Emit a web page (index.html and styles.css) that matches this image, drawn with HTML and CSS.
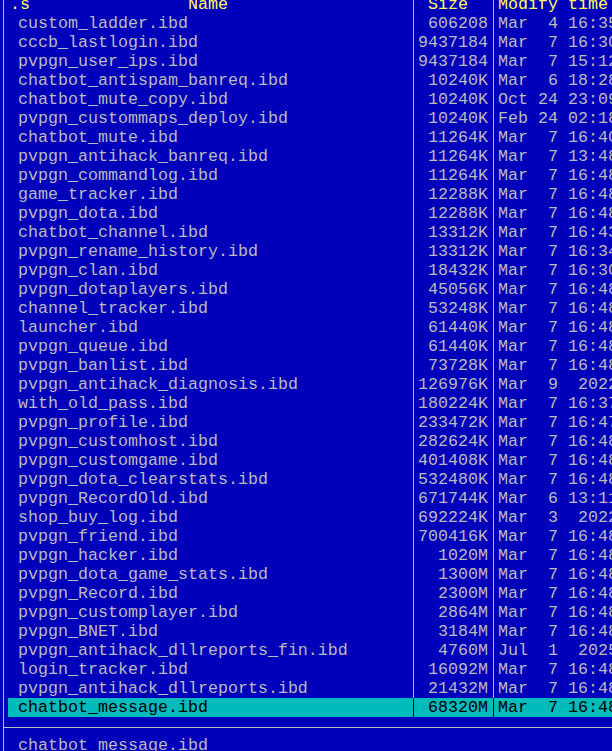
FILE: index.html
```html
<!DOCTYPE html>
<html>
<head>
<meta charset="utf-8">
<link rel="stylesheet" href="styles.css">
</head>
<body>
<div class="panel">
  <div class="row head"><span class="bd"></span><span class="type">.s</span><span class="name">Name</span><span class="sep"></span><span class="size">Size</span><span class="sep"></span><span class="time">Modify time</span><span class="bd"></span></div>
  <div class="row"><span class="bd"></span><span class="type"></span><span class="name">custom_ladder.ibd</span><span class="sep"></span><span class="size">606208</span><span class="sep"></span><span class="time">Mar  4 16:35</span><span class="bd"></span></div>
  <div class="row"><span class="bd"></span><span class="type"></span><span class="name">cccb_lastlogin.ibd</span><span class="sep"></span><span class="size">9437184</span><span class="sep"></span><span class="time">Mar  7 16:30</span><span class="bd"></span></div>
  <div class="row"><span class="bd"></span><span class="type"></span><span class="name">pvpgn_user_ips.ibd</span><span class="sep"></span><span class="size">9437184</span><span class="sep"></span><span class="time">Mar  7 15:12</span><span class="bd"></span></div>
  <div class="row"><span class="bd"></span><span class="type"></span><span class="name">chatbot_antispam_banreq.ibd</span><span class="sep"></span><span class="size">10240K</span><span class="sep"></span><span class="time">Mar  6 18:28</span><span class="bd"></span></div>
  <div class="row"><span class="bd"></span><span class="type"></span><span class="name">chatbot_mute_copy.ibd</span><span class="sep"></span><span class="size">10240K</span><span class="sep"></span><span class="time">Oct 24 23:09</span><span class="bd"></span></div>
  <div class="row"><span class="bd"></span><span class="type"></span><span class="name">pvpgn_custommaps_deploy.ibd</span><span class="sep"></span><span class="size">10240K</span><span class="sep"></span><span class="time">Feb 24 02:18</span><span class="bd"></span></div>
  <div class="row"><span class="bd"></span><span class="type"></span><span class="name">chatbot_mute.ibd</span><span class="sep"></span><span class="size">11264K</span><span class="sep"></span><span class="time">Mar  7 16:40</span><span class="bd"></span></div>
  <div class="row"><span class="bd"></span><span class="type"></span><span class="name">pvpgn_antihack_banreq.ibd</span><span class="sep"></span><span class="size">11264K</span><span class="sep"></span><span class="time">Mar  7 13:48</span><span class="bd"></span></div>
  <div class="row"><span class="bd"></span><span class="type"></span><span class="name">pvpgn_commandlog.ibd</span><span class="sep"></span><span class="size">11264K</span><span class="sep"></span><span class="time">Mar  7 16:48</span><span class="bd"></span></div>
  <div class="row"><span class="bd"></span><span class="type"></span><span class="name">game_tracker.ibd</span><span class="sep"></span><span class="size">12288K</span><span class="sep"></span><span class="time">Mar  7 16:48</span><span class="bd"></span></div>
  <div class="row"><span class="bd"></span><span class="type"></span><span class="name">pvpgn_dota.ibd</span><span class="sep"></span><span class="size">12288K</span><span class="sep"></span><span class="time">Mar  7 16:48</span><span class="bd"></span></div>
  <div class="row"><span class="bd"></span><span class="type"></span><span class="name">chatbot_channel.ibd</span><span class="sep"></span><span class="size">13312K</span><span class="sep"></span><span class="time">Mar  7 16:43</span><span class="bd"></span></div>
  <div class="row"><span class="bd"></span><span class="type"></span><span class="name">pvpgn_rename_history.ibd</span><span class="sep"></span><span class="size">13312K</span><span class="sep"></span><span class="time">Mar  7 16:34</span><span class="bd"></span></div>
  <div class="row"><span class="bd"></span><span class="type"></span><span class="name">pvpgn_clan.ibd</span><span class="sep"></span><span class="size">18432K</span><span class="sep"></span><span class="time">Mar  7 16:30</span><span class="bd"></span></div>
  <div class="row"><span class="bd"></span><span class="type"></span><span class="name">pvpgn_dotaplayers.ibd</span><span class="sep"></span><span class="size">45056K</span><span class="sep"></span><span class="time">Mar  7 16:48</span><span class="bd"></span></div>
  <div class="row"><span class="bd"></span><span class="type"></span><span class="name">channel_tracker.ibd</span><span class="sep"></span><span class="size">53248K</span><span class="sep"></span><span class="time">Mar  7 16:48</span><span class="bd"></span></div>
  <div class="row"><span class="bd"></span><span class="type"></span><span class="name">launcher.ibd</span><span class="sep"></span><span class="size">61440K</span><span class="sep"></span><span class="time">Mar  7 16:48</span><span class="bd"></span></div>
  <div class="row"><span class="bd"></span><span class="type"></span><span class="name">pvpgn_queue.ibd</span><span class="sep"></span><span class="size">61440K</span><span class="sep"></span><span class="time">Mar  7 16:48</span><span class="bd"></span></div>
  <div class="row"><span class="bd"></span><span class="type"></span><span class="name">pvpgn_banlist.ibd</span><span class="sep"></span><span class="size">73728K</span><span class="sep"></span><span class="time">Mar  7 16:48</span><span class="bd"></span></div>
  <div class="row"><span class="bd"></span><span class="type"></span><span class="name">pvpgn_antihack_diagnosis.ibd</span><span class="sep"></span><span class="size">126976K</span><span class="sep"></span><span class="time">Mar  9  2022</span><span class="bd"></span></div>
  <div class="row"><span class="bd"></span><span class="type"></span><span class="name">with_old_pass.ibd</span><span class="sep"></span><span class="size">180224K</span><span class="sep"></span><span class="time">Mar  7 16:37</span><span class="bd"></span></div>
  <div class="row"><span class="bd"></span><span class="type"></span><span class="name">pvpgn_profile.ibd</span><span class="sep"></span><span class="size">233472K</span><span class="sep"></span><span class="time">Mar  7 16:47</span><span class="bd"></span></div>
  <div class="row"><span class="bd"></span><span class="type"></span><span class="name">pvpgn_customhost.ibd</span><span class="sep"></span><span class="size">282624K</span><span class="sep"></span><span class="time">Mar  7 16:48</span><span class="bd"></span></div>
  <div class="row"><span class="bd"></span><span class="type"></span><span class="name">pvpgn_customgame.ibd</span><span class="sep"></span><span class="size">401408K</span><span class="sep"></span><span class="time">Mar  7 16:48</span><span class="bd"></span></div>
  <div class="row"><span class="bd"></span><span class="type"></span><span class="name">pvpgn_dota_clearstats.ibd</span><span class="sep"></span><span class="size">532480K</span><span class="sep"></span><span class="time">Mar  7 16:48</span><span class="bd"></span></div>
  <div class="row"><span class="bd"></span><span class="type"></span><span class="name">pvpgn_RecordOld.ibd</span><span class="sep"></span><span class="size">671744K</span><span class="sep"></span><span class="time">Mar  6 13:11</span><span class="bd"></span></div>
  <div class="row"><span class="bd"></span><span class="type"></span><span class="name">shop_buy_log.ibd</span><span class="sep"></span><span class="size">692224K</span><span class="sep"></span><span class="time">Mar  3  2022</span><span class="bd"></span></div>
  <div class="row"><span class="bd"></span><span class="type"></span><span class="name">pvpgn_friend.ibd</span><span class="sep"></span><span class="size">700416K</span><span class="sep"></span><span class="time">Mar  7 16:48</span><span class="bd"></span></div>
  <div class="row"><span class="bd"></span><span class="type"></span><span class="name">pvpgn_hacker.ibd</span><span class="sep"></span><span class="size">1020M</span><span class="sep"></span><span class="time">Mar  7 16:48</span><span class="bd"></span></div>
  <div class="row"><span class="bd"></span><span class="type"></span><span class="name">pvpgn_dota_game_stats.ibd</span><span class="sep"></span><span class="size">1300M</span><span class="sep"></span><span class="time">Mar  7 16:48</span><span class="bd"></span></div>
  <div class="row"><span class="bd"></span><span class="type"></span><span class="name">pvpgn_Record.ibd</span><span class="sep"></span><span class="size">2300M</span><span class="sep"></span><span class="time">Mar  7 16:48</span><span class="bd"></span></div>
  <div class="row"><span class="bd"></span><span class="type"></span><span class="name">pvpgn_customplayer.ibd</span><span class="sep"></span><span class="size">2864M</span><span class="sep"></span><span class="time">Mar  7 16:48</span><span class="bd"></span></div>
  <div class="row"><span class="bd"></span><span class="type"></span><span class="name">pvpgn_BNET.ibd</span><span class="sep"></span><span class="size">3184M</span><span class="sep"></span><span class="time">Mar  7 16:48</span><span class="bd"></span></div>
  <div class="row"><span class="bd"></span><span class="type"></span><span class="name">pvpgn_antihack_dllreports_fin.ibd</span><span class="sep"></span><span class="size">4760M</span><span class="sep"></span><span class="time">Jul  1  2025</span><span class="bd"></span></div>
  <div class="row"><span class="bd"></span><span class="type"></span><span class="name">login_tracker.ibd</span><span class="sep"></span><span class="size">16092M</span><span class="sep"></span><span class="time">Mar  7 16:48</span><span class="bd"></span></div>
  <div class="row"><span class="bd"></span><span class="type"></span><span class="name">pvpgn_antihack_dllreports.ibd</span><span class="sep"></span><span class="size">21432M</span><span class="sep"></span><span class="time">Mar  7 16:48</span><span class="bd"></span></div>
  <div class="row sel"><span class="bd"></span><span class="type"></span><span class="name">chatbot_message.ibd</span><span class="sep"></span><span class="size">68320M</span><span class="sep"></span><span class="time">Mar  7 16:48</span><span class="bd"></span></div>
  <div class="divider"></div>
  <div class="status">chatbot_message.ibd</div>
</div>
</body>
</html>
```
FILE: styles.css
```css
html, body {
  margin: 0;
  padding: 0;
  background: #0000bb;
  width: 612px;
  height: 751px;
  overflow: hidden;
}

.panel {
  margin: -5px 0 0 -2px;
  width: 640px;
  font-family: "Liberation Mono", "DejaVu Sans Mono", monospace;
  font-size: 16.67px;
  line-height: 19px;
  color: #bbbbbb;
}

.row {
  display: grid;
  grid-template-columns: 10px 10px 390px 10px 70px 10px 120px 10px;
  height: 19px;
}

.row > span {
  height: 19px;
  white-space: pre;
}

.bd {
  background: linear-gradient(#bbbbbb, #bbbbbb) no-repeat 5px 0 / 1px 100%;
}

.row > .bd:last-child {
  background: none;
}

.sep {
  background: linear-gradient(#bbbbbb, #bbbbbb) no-repeat 5px 0 / 1px 100%;
}

.size {
  text-align: right;
}

.head {
  color: #ffff55;
}

.head .type {
  padding-left: 2px;
}

.head .name {
  padding-left: 170px;
}

.head .size {
  text-align: left;
  padding-left: 10px;
}

.sel > span:not(.bd) {
  background-color: #00bbbb;
  color: #000000;
}

.sel > .sep {
  background: linear-gradient(#000000, #000000) no-repeat 5px 0 / 1px 100%, #00bbbb;
}

.divider {
  height: 19px;
  background:
    linear-gradient(#bbbbbb, #bbbbbb) no-repeat 5px 0 / 1px 100%,
    linear-gradient(#bbbbbb, #bbbbbb) no-repeat 5px 10px / 100% 1px;
}

.status {
  height: 19px;
  padding-left: 20px;
  white-space: pre;
  background: linear-gradient(#bbbbbb, #bbbbbb) no-repeat 5px 0 / 1px 100%;
}
```
